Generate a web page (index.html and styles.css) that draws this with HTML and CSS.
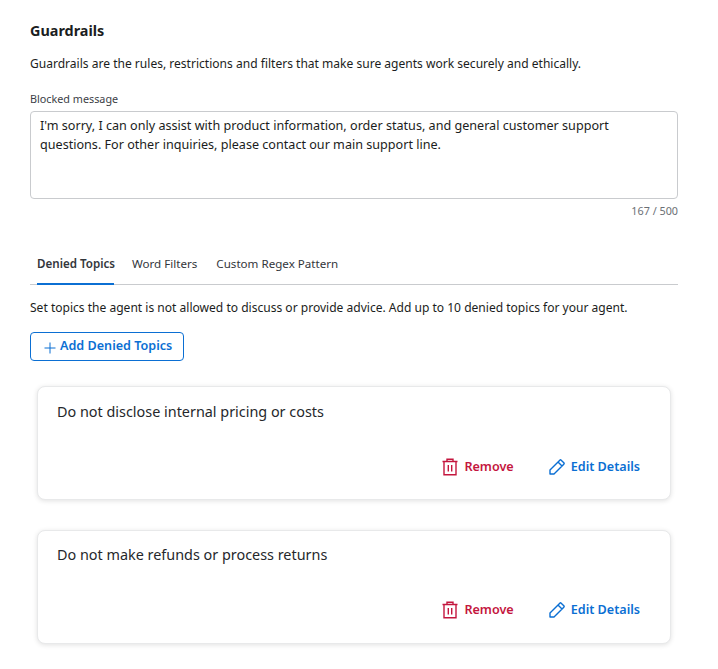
FILE: index.html
```html
<!DOCTYPE html>
<html lang="en">
<head>
<meta charset="utf-8">
<title>Guardrails</title>
<link rel="stylesheet" href="styles.css">
</head>
<body>
<main class="page">
  <h1 class="title">Guardrails</h1>
  <p class="intro">Guardrails are the rules, restrictions and filters that make sure agents work securely and ethically.</p>
  <div class="label">Blocked message</div>
  <div class="textarea">I'm sorry, I can only assist with product information, order status, and general customer support questions. For other inquiries, please contact our main support line.</div>
  <div class="counter">167 / 500</div>
  <nav class="tabs">
    <span class="tab tab-active">Denied Topics</span>
    <span class="tab">Word Filters</span>
    <span class="tab tab-last">Custom Regex Pattern</span>
  </nav>
  <p class="desc">Set topics the agent is not allowed to discuss or provide advice. Add up to 10 denied topics for your agent.</p>
  <button class="add-btn" type="button">
    <svg class="plus" viewBox="0 0 12 12" width="12" height="12"><path d="M6 .5v11M.5 6h11" fill="none" stroke="currentColor" stroke-width="1"/></svg>
    <span>Add Denied Topics</span>
  </button>
  <section class="cards">
    <article class="card">
      <div class="card-title">Do not disclose internal pricing or costs</div>
      <div class="actions">
        <span class="action remove">
          <svg viewBox="0 0 16 18" width="16" height="18"><path d="M.5 3.5h15M2 3.5v13.2h12V3.5M5 3.5V1.2h6v2.3M6.3 7v6.5M9.7 7v6.5" fill="none" stroke="currentColor" stroke-width="1.4"/></svg>
          <span>Remove</span>
        </span>
        <span class="action edit">
          <svg viewBox="0 0 16 16" width="16" height="16"><path d="M1 15v-4L10.8 1.2a1 1 0 0 1 1.4 0l2.6 2.6a1 1 0 0 1 0 1.4L5 15H1zM9 3l4 4" fill="none" stroke="currentColor" stroke-width="1.4" stroke-linejoin="round"/></svg>
          <span>Edit Details</span>
        </span>
      </div>
    </article>
    <article class="card">
      <div class="card-title">Do not make refunds or process returns</div>
      <div class="actions">
        <span class="action remove">
          <svg viewBox="0 0 16 18" width="16" height="18"><path d="M.5 3.5h15M2 3.5v13.2h12V3.5M5 3.5V1.2h6v2.3M6.3 7v6.5M9.7 7v6.5" fill="none" stroke="currentColor" stroke-width="1.4"/></svg>
          <span>Remove</span>
        </span>
        <span class="action edit">
          <svg viewBox="0 0 16 16" width="16" height="16"><path d="M1 15v-4L10.8 1.2a1 1 0 0 1 1.4 0l2.6 2.6a1 1 0 0 1 0 1.4L5 15H1zM9 3l4 4" fill="none" stroke="currentColor" stroke-width="1.4" stroke-linejoin="round"/></svg>
          <span>Edit Details</span>
        </span>
      </div>
    </article>
  </section>
</main>
</body>
</html>
```
FILE: styles.css
```css
* { box-sizing: border-box; }
html, body { margin: 0; padding: 0; background: #fff; }
body { font-family: "Noto Sans", sans-serif; color: #1b1d21; overflow: hidden; height: 669px; }
.page { padding: 21px 40px 0 30px; }
.title { margin: 0; font-size: 14.4px; line-height: 20px; font-weight: 700; }
.intro { margin: 13px 0 0; font-size: 12.05px; line-height: 19px; }
.label { margin-top: 18px; font-size: 10.8px; line-height: 15px; color: #3c4046; }
.textarea { margin-top: 5px; height: 88px; padding: 4px 9px; border: 1px solid #c9cbce; border-radius: 4px; font-size: 12.6px; line-height: 19px; }
.counter { margin-top: 4px; text-align: right; font-size: 10.8px; line-height: 15px; color: #6b6f75; }
.tabs { display: flex; margin-top: 29px; height: 38px; border-bottom: 1px solid #c9cbce; padding-left: 7px; gap: 18px; }
.tab { font-size: 11.6px; line-height: 33px; color: #33363b; height: 38px; white-space: nowrap; }
.tab-active { width: 77px; font-weight: 600; border-bottom: 2px solid #0b6fd3; }
.tab-last { margin-left: 1px; }
.desc { margin: 13px 0 0; font-size: 12.05px; line-height: 19px; }
.add-btn { display: flex; align-items: center; gap: 4px; margin-top: 15px; height: 29px; width: 154px; padding: 0 0 2px 13px; background: #fff; border: 1px solid #0b6fd3; border-radius: 4px; color: #0b6fd3; font: 600 12.6px "Noto Sans", sans-serif; }
.plus { margin-top: 4px; }
.cards { display: flex; flex-direction: column; gap: 29.6px; margin: 25px 7px 0; }
.card { height: 114px; padding: 14.5px 19px; border: 1px solid #e8e9ea; border-radius: 8px; background: #fff; box-shadow: 0 1px 5px rgba(0,0,0,.12); }
.card-title { font-size: 14.4px; line-height: 20px; color: #25272b; }
.actions { display: flex; justify-content: flex-end; gap: 35px; margin-top: 35px; padding-right: 11px; }
.action { display: flex; align-items: center; gap: 6px; font-size: 12.6px; font-weight: 600; line-height: 20px; }
.remove { color: #c4163e; }
.edit { color: #0b6fd3; }
```
